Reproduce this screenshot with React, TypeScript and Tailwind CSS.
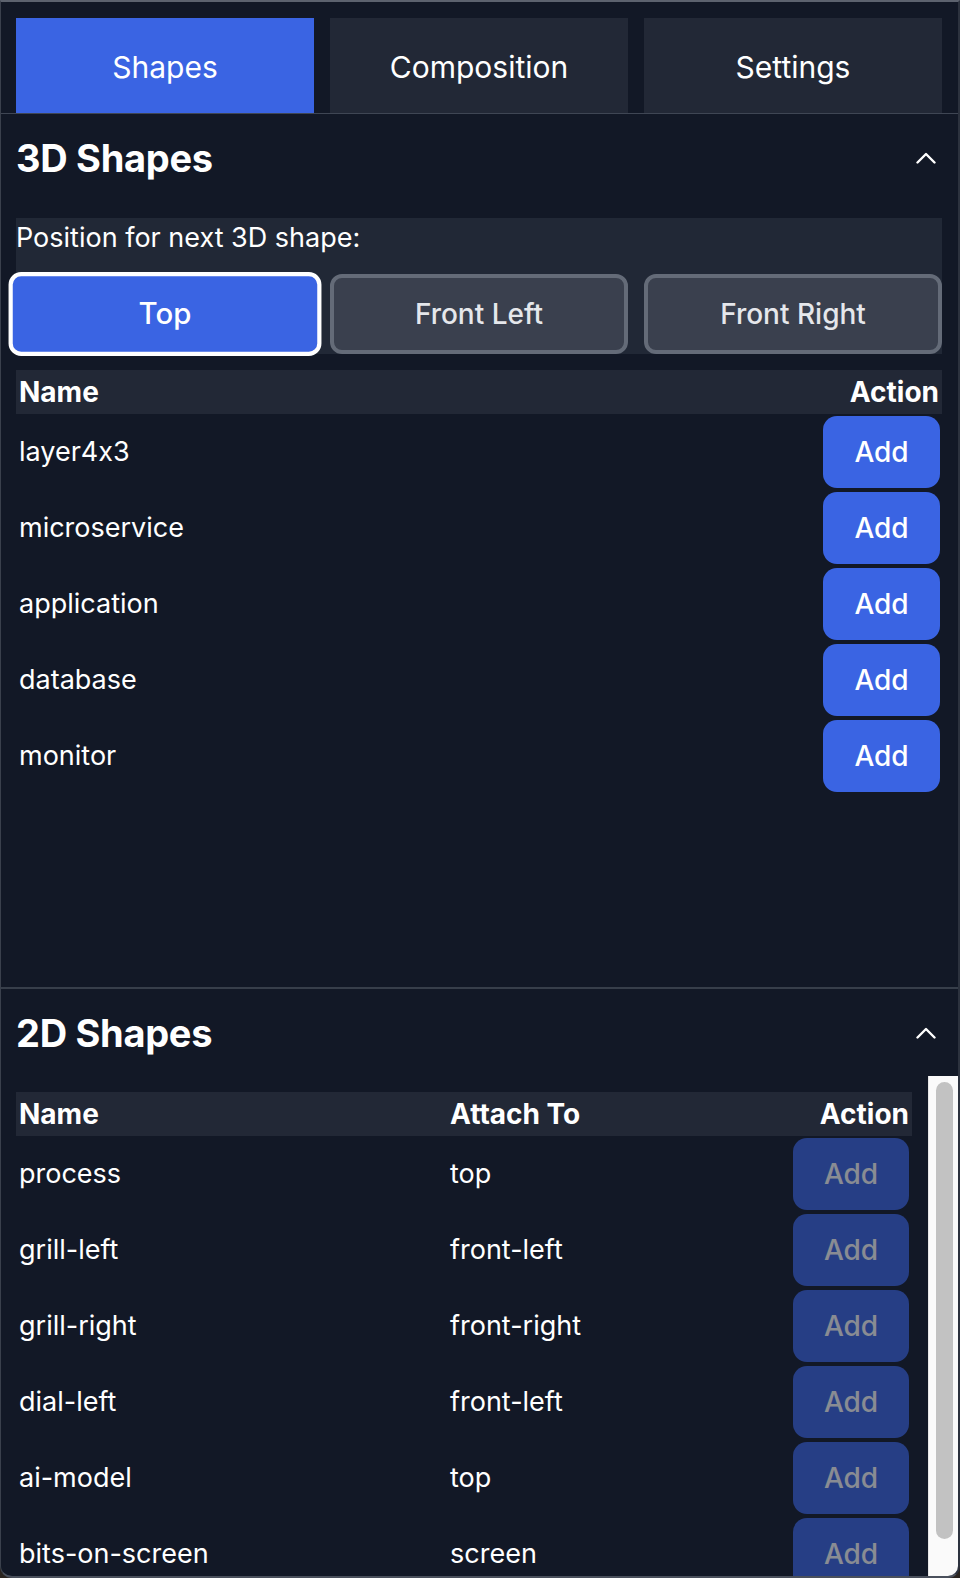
import React, { useState } from 'react';

const shapes3d = ['layer4x3', 'microservice', 'application', 'database', 'monitor'];

const shapes2d = [
  { name: 'process', attach: 'top' },
  { name: 'grill-left', attach: 'front-left' },
  { name: 'grill-right', attach: 'front-right' },
  { name: 'dial-left', attach: 'front-left' },
  { name: 'ai-model', attach: 'top' },
  { name: 'bits-on-screen', attach: 'screen' },
];

const tabs = ['Shapes', 'Composition', 'Settings'];
const positions = ['Top', 'Front Left', 'Front Right'];

const Chevron: React.FC = () => (
  <svg width="20" height="12" viewBox="0 0 20 12" fill="none" className="mr-[6px]">
    <polyline points="1.5 10.5 10 2 18.5 10.5" stroke="white" strokeWidth="2.4" strokeLinecap="round" strokeLinejoin="round" />
  </svg>
);

const App: React.FC = () => {
  const [activeTab, setActiveTab] = useState('Shapes');
  const [position, setPosition] = useState('Top');

  return (
    <div className="w-[960px] h-[1578px] bg-[#2a241f] font-['Inter','Liberation_Sans',sans-serif] [font-feature-settings:'calt'_0]">
      <div className="h-full flex flex-col bg-[#121826] border-t-2 border-t-[#5c626e] border-l border-l-[#3a404c] border-r-2 border-r-[#2c323e] border-b-2 border-b-[#4a505c] rounded-b-[12px] overflow-hidden">
        {/* Tabs */}
        <div className="flex gap-4 pl-[15px] pr-4 pt-4 border-b border-[#3f4654]">
          {tabs.map((tab) => (
            <button
              key={tab}
              onClick={() => setActiveTab(tab)}
              className={
                activeTab === tab
                  ? 'flex-1 h-[95px] pt-1 bg-[#3a64e3] text-white text-[30px]'
                  : 'flex-1 h-[95px] pt-1 bg-[#222836] text-white text-[30px]'
              }
            >
              {tab}
            </button>
          ))}
        </div>

        {/* 3D Shapes */}
        <div className="h-[875px] shrink-0 pl-[15px] pr-4 border-b-2 border-[#373e4a]">
          <div className="flex items-center justify-between pt-4">
            <h2 className="text-[38px] leading-[56px] font-bold text-white tracking-[-0.3px]">3D Shapes</h2>
            <Chevron />
          </div>

          <div className="mt-8 bg-[#212836]">
            <p className="text-[27px] leading-[40px] text-white">Position for next 3D shape:</p>
            <div className="grid grid-cols-3 gap-4 mt-4">
              {positions.map((p) => (
                <button
                  key={p}
                  onClick={() => setPosition(p)}
                  className={
                    position === p
                      ? 'h-[80px] rounded-[12px] border-4 border-white bg-[#3a64e3] text-white text-[28px] font-medium scale-105'
                      : 'h-[80px] rounded-[12px] border-4 border-[#646b78] bg-[#3a404e] text-[#e5e7eb] text-[28px] font-medium'
                  }
                >
                  {p}
                </button>
              ))}
            </div>
          </div>

          <div className="mt-4 h-[44px] bg-[#222836] flex items-center justify-between pl-[3px] pr-[3px] text-[28px] font-bold text-white">
            <span>Name</span>
            <span>Action</span>
          </div>
          {shapes3d.map((s) => (
            <div key={s} className="h-[76px] flex items-center justify-between pl-[3px] pr-[2px]">
              <span className="text-[27px] text-white">{s}</span>
              <button className="w-[117px] h-[72px] rounded-[14px] bg-[#3a64e3] text-white text-[28px] font-medium">
                Add
              </button>
            </div>
          ))}
        </div>

        {/* 2D Shapes */}
        <div className="flex-1 min-h-0 flex flex-col">
          <div className="flex items-center justify-between pt-4 pl-[15px] pr-4">
            <h2 className="text-[38px] leading-[56px] font-bold text-white tracking-[-0.3px]">2D Shapes</h2>
            <Chevron />
          </div>

          <div className="mt-[15px] flex-1 min-h-0 flex pl-[15px]">
            <div className="flex-1 pt-4 pr-4 overflow-hidden">
              <div className="grid grid-cols-[431px_1fr_auto] h-[44px] items-center bg-[#222836] text-[28px] font-bold text-white">
                <span className="pl-[3px]">Name</span>
                <span className="pl-[3px]">Attach To</span>
                <span className="pr-[3px]">Action</span>
              </div>
              {shapes2d.map((s) => (
                <div key={s.name} className="grid grid-cols-[431px_1fr_auto] h-[76px] items-center text-[27px] text-white">
                  <span className="pl-[3px]">{s.name}</span>
                  <span className="pl-[3px]">{s.attach}</span>
                  <button
                    disabled
                    className="w-[116px] h-[72px] mr-[3px] rounded-[14px] bg-[#3a64e3] text-white text-[28px] font-medium disabled:opacity-50"
                  >
                    Add
                  </button>
                </div>
              ))}
            </div>
            {/* scrollbar */}
            <div className="w-[30px] shrink-0 bg-[#fafafa] border-l border-[#e6e6e6]">
              <div className="ml-[7px] mt-[6px] w-[17px] h-[457px] rounded-full bg-[#c2c2c2]" />
            </div>
          </div>
        </div>
      </div>
    </div>
  );
};

export default App;
